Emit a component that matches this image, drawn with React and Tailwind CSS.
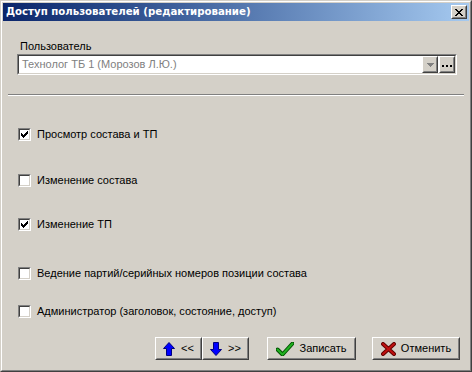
// App.jsx
function Raised({ className = "", children }) {
    return (
        <div className={`border border-t-white border-l-white border-r-[#404040] border-b-[#404040] ${className}`}>
            <div className="w-full h-full border border-t-[#d4d0c8] border-l-[#d4d0c8] border-r-[#808080] border-b-[#808080] flex items-center justify-center bg-[#d4d0c8]">
                {children}
            </div>
        </div>
    );
}

function CheckMark() {
    const px = [
        [6, 0], [5, 1], [6, 1], [0, 2], [4, 2], [5, 2], [6, 2],
        [0, 3], [1, 3], [3, 3], [4, 3], [5, 3],
        [0, 4], [1, 4], [2, 4], [3, 4], [4, 4],
        [1, 5], [2, 5], [3, 5], [2, 6],
    ];
    return (
        <svg width="7" height="7" viewBox="0 0 7 7" shapeRendering="crispEdges">
            {px.map(([x, y]) => (
                <rect key={`${x}-${y}`} x={x} y={y} width="1" height="1" fill="#000" />
            ))}
        </svg>
    );
}

function CheckRow({ checked, label, className = "" }) {
    return (
        <div className={`flex items-center h-[13px] ml-[15px] ${className}`}>
            <div className="w-[13px] h-[13px] border border-t-[#808080] border-l-[#808080] border-r-white border-b-white shrink-0">
                <div className="w-full h-full border border-t-[#404040] border-l-[#404040] border-r-[#d4d0c8] border-b-[#d4d0c8] bg-white flex items-center justify-center">
                    {checked && <CheckMark />}
                </div>
            </div>
            <span className="ml-[6px] text-[11px] leading-[13px] text-black whitespace-nowrap">{label}</span>
        </div>
    );
}

function ArrowUp() {
    return (
        <svg width="12" height="14" viewBox="0 0 12 14">
            <path d="M6 0.5 L11.5 6.5 L8.5 6.5 L8.5 13.5 L3.5 13.5 L3.5 6.5 L0.5 6.5 Z" fill="#0000ff" stroke="#000080" strokeWidth="1" />
        </svg>
    );
}

function ArrowDown() {
    return (
        <svg width="12" height="14" viewBox="0 0 12 14">
            <path d="M6 13.5 L11.5 7.5 L8.5 7.5 L8.5 0.5 L3.5 0.5 L3.5 7.5 L0.5 7.5 Z" fill="#0000ff" stroke="#000080" strokeWidth="1" />
        </svg>
    );
}

function GreenCheck() {
    return (
        <svg width="18" height="14" viewBox="0 0 18 14">
            <path d="M1.5 7.5 L6.5 12.5 L16.5 1.5" fill="none" stroke="#005000" strokeWidth="4" strokeLinecap="round" strokeLinejoin="round" />
            <path d="M1.5 7.5 L6.5 12.5 L16.5 1.5" fill="none" stroke="#20b020" strokeWidth="2" strokeLinecap="round" strokeLinejoin="round" />
        </svg>
    );
}

function RedCross() {
    return (
        <svg width="15" height="14" viewBox="0 0 15 14">
            <path d="M2 2 L13 12 M13 2 L2 12" fill="none" stroke="#600000" strokeWidth="4" strokeLinecap="round" />
            <path d="M2 2 L13 12 M13 2 L2 12" fill="none" stroke="#c01010" strokeWidth="2" strokeLinecap="round" />
        </svg>
    );
}

export default function App() {
    return (
        <div
            className="w-[472px] h-[372px] border border-t-[#d4d0c8] border-l-[#d4d0c8] border-r-[#404040] border-b-[#404040] bg-[#d4d0c8]"
            style={{ fontFamily: '"Liberation Sans", Arial, sans-serif' }}
        >
            <div className="w-full h-full border border-t-white border-l-white border-r-[#808080] border-b-[#808080] p-px flex flex-col">
                {/* title bar */}
                <div className="h-[18px] shrink-0 flex items-center bg-gradient-to-r from-[#0a246a] to-[#a6caf0] pl-[3px] pr-[2px]">
                    <span className="text-white font-bold text-[10.2px] leading-[18px] whitespace-nowrap" style={{ fontFamily: '"DejaVu Sans", sans-serif' }}>
                        Доступ пользователей (редактирование)
                    </span>
                    <Raised className="ml-auto w-[16px] h-[14px]">
                        <svg width="8" height="7" viewBox="0 0 8 7" shapeRendering="crispEdges">
                            <path d="M0 0h2v1h-2zM6 0h2v1h-2zM1 1h2v1h-2zM5 1h2v1h-2zM2 2h4v1h-4zM3 3h2v1h-2zM2 4h4v1h-4zM1 5h2v1h-2zM5 5h2v1h-2zM0 6h2v1h-2zM6 6h2v1h-2z" fill="#000" />
                        </svg>
                    </Raised>
                </div>

                {/* body */}
                <div className="flex-1 flex flex-col text-[11px] text-black">
                    <div className="ml-[17px] mt-[19px] h-[13px] leading-[13px]">Пользователь</div>

                    <div className="ml-[14px] mt-[1px] w-[440px] h-[21px] border border-t-[#808080] border-l-[#808080] border-r-white border-b-white">
                        <div className="w-full h-full border border-t-[#404040] border-l-[#404040] border-r-[#d4d0c8] border-b-[#d4d0c8] bg-white flex items-center">
                            <span className="ml-[3px] text-[#808080] leading-[13px] whitespace-nowrap">Технолог ТБ 1 (Морозов Л.Ю.)</span>
                            <Raised className="ml-auto w-[16px] h-[17px]">
                                <svg width="7" height="4" viewBox="0 0 7 4" shapeRendering="crispEdges">
                                    <path d="M0 0h7v1h-7zM1 1h5v1h-5zM2 2h3v1h-3zM3 3h1v1h-1z" fill="#808080" />
                                </svg>
                            </Raised>
                            <Raised className="ml-px w-[16px] h-[17px]">
                                <div className="flex gap-[2px] mt-[3px]">
                                    <span className="w-[2px] h-[2px] bg-black" />
                                    <span className="w-[2px] h-[2px] bg-black" />
                                    <span className="w-[2px] h-[2px] bg-black" />
                                </div>
                            </Raised>
                        </div>
                    </div>

                    <div className="ml-[5px] mt-[19px] w-[456px] h-[2px] border-t border-t-[#808080] border-b border-b-white" />

                    <CheckRow checked label="Просмотр состава и ТП" className="mt-[32px]" />
                    <CheckRow label="Изменение состава" className="mt-[33px]" />
                    <CheckRow checked label="Изменение ТП" className="mt-[31px]" />
                    <CheckRow label="Ведение партий/серийных номеров позиции состава" className="mt-[36px]" />
                    <CheckRow label="Администратор (заголовок, состояние, доступ)" className="mt-[25px]" />

                    <div className="flex mt-[19px] ml-[152px] h-[23px]">
                        <Raised className="w-[47px] h-[23px]">
                            <div className="flex items-center gap-[6px]">
                                <ArrowUp />
                                <span className="leading-[13px]">&lt;&lt;</span>
                            </div>
                        </Raised>
                        <Raised className="w-[47px] h-[23px]">
                            <div className="flex items-center gap-[6px]">
                                <ArrowDown />
                                <span className="leading-[13px]">&gt;&gt;</span>
                            </div>
                        </Raised>
                        <Raised className="ml-[18px] w-[89px] h-[23px]">
                            <div className="flex items-center gap-[5px]">
                                <GreenCheck />
                                <span className="leading-[13px]">Записать</span>
                            </div>
                        </Raised>
                        <Raised className="ml-[16px] w-[88px] h-[23px]">
                            <div className="flex items-center gap-[5px]">
                                <RedCross />
                                <span className="leading-[13px]">Отменить</span>
                            </div>
                        </Raised>
                    </div>
                </div>
            </div>
        </div>
    );
}
